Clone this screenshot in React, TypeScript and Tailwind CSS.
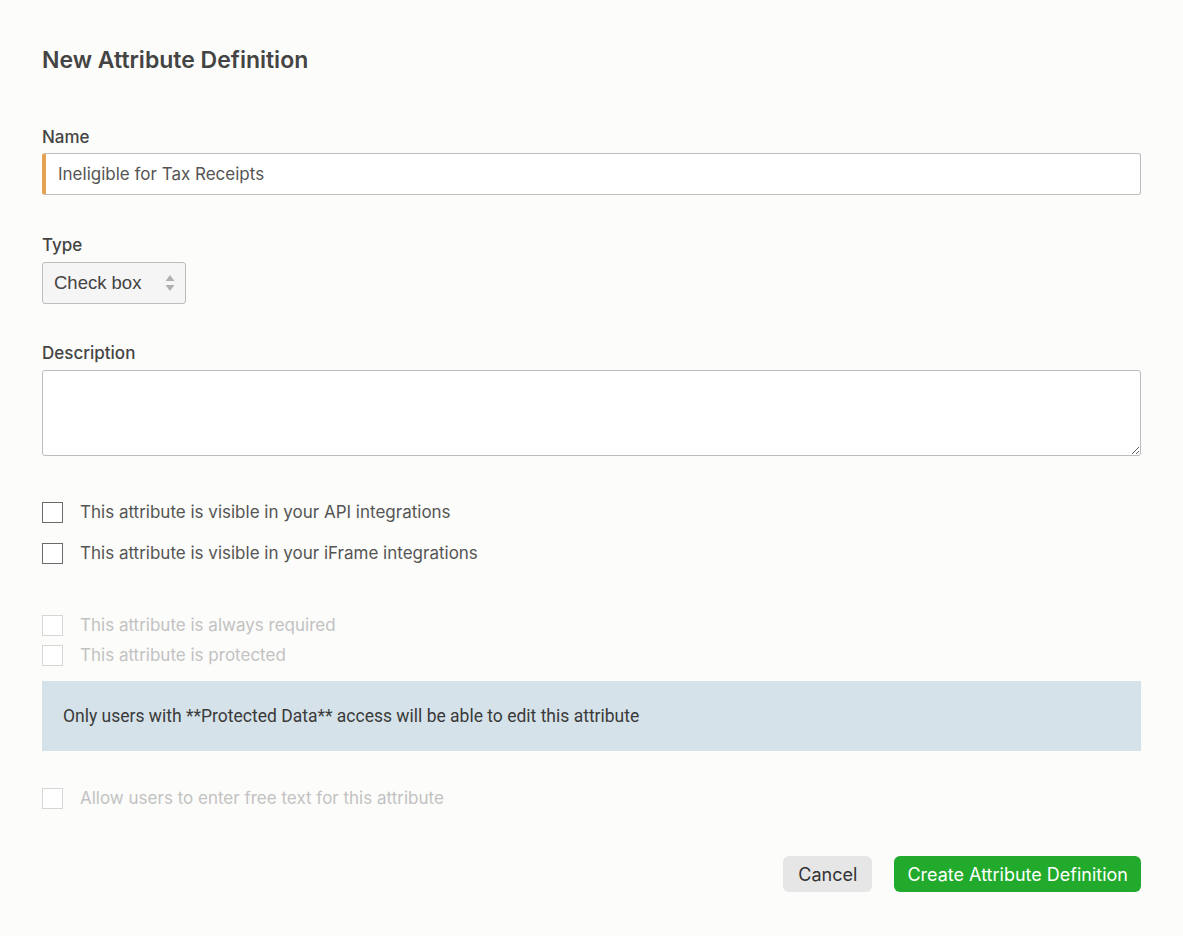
import { useState } from 'react'

const font = { fontFamily: 'Inter, "Noto Sans", sans-serif' }

function CheckRow({ label, disabled, checked, onChange }: { label: string; disabled?: boolean; checked?: boolean; onChange?: () => void }) {
  return (
    <label className={`flex items-center gap-[17px] ${disabled ? 'text-[#c2c2c2]' : 'text-[#555] cursor-pointer'}`}>
      <input
        type="checkbox"
        disabled={disabled}
        checked={!!checked}
        onChange={onChange}
        className={`appearance-none w-[21px] h-[21px] border bg-white shrink-0 ${disabled ? 'border-[#d6d6d6]' : 'border-[#6b6b6b]'}`}
      />
      <span className="text-[17px] leading-[21px]">{label}</span>
    </label>
  )
}

export default function App() {
  const [name, setName] = useState('Ineligible for Tax Receipts')
  const [api, setApi] = useState(false)
  const [iframe, setIframe] = useState(false)

  return (
    <div className="min-h-screen bg-[#fcfcfa] px-[42px] pt-[44px] pb-10" style={font}>
      <h1 className="text-[23px] font-semibold text-[#444] leading-[32px]">New Attribute Definition</h1>

      <div className="mt-[50px]">
        <div className="text-[17px] font-medium text-[#444] leading-[22px]">Name</div>
        <input
          value={name}
          onChange={e => setName(e.target.value)}
          className="mt-[5px] w-full h-[42px] border border-[#bcbcbc] border-l-[4px] border-l-[#e3a353] rounded-[3px] bg-white pl-[12px] text-[17px] text-[#555] outline-none"
        />
      </div>

      <div className="mt-[39px]">
        <div className="text-[17px] font-medium text-[#444] leading-[22px]">Type</div>
        <div className="mt-[6px] relative w-[144px] h-[42px]">
          <select
            className="appearance-none w-full h-full border border-[#bcbcbc] rounded-[3px] bg-[#f5f5f5] pl-[11px] text-[18.5px] text-[#444] outline-none"
            style={{ fontFamily: '"Liberation Sans", Arial, sans-serif' }}
          >
            <option>Check box</option>
            <option>Text</option>
            <option>Number</option>
          </select>
          <svg className="absolute right-[11px] top-[12px] pointer-events-none" width="10" height="18" viewBox="0 0 10 18">
            <path d="M5 1 L9.5 7 H0.5 Z" fill="#b0b0b0" />
            <path d="M5 17 L9.5 11 H0.5 Z" fill="#b0b0b0" />
          </svg>
        </div>
      </div>

      <div className="mt-[38px]">
        <div className="text-[17px] font-medium text-[#444] leading-[22px]">Description</div>
        <textarea className="mt-[6px] block w-full h-[86px] border border-[#bcbcbc] rounded-[3px] bg-white p-2 text-[17px] outline-none" />
      </div>

      <div className="mt-[46px] flex flex-col gap-[20px]">
        <CheckRow label="This attribute is visible in your API integrations" checked={api} onChange={() => setApi(!api)} />
        <CheckRow label="This attribute is visible in your iFrame integrations" checked={iframe} onChange={() => setIframe(!iframe)} />
      </div>

      <div className="mt-[51px] flex flex-col gap-[9px]">
        <CheckRow label="This attribute is always required" disabled />
        <CheckRow label="This attribute is protected" disabled />
      </div>

      <div
        className="mt-[15px] h-[70px] bg-[#d5e2e9] flex items-center px-[21px] text-[17.5px] text-[#3a3a3a]"
        style={{ fontFamily: 'Roboto, sans-serif' }}
      >
        Only users with **Protected Data** access will be able to edit this attribute
      </div>

      <div className="mt-[37px]">
        <CheckRow label="Allow users to enter free text for this attribute" disabled />
      </div>

      <div className="mt-[47px] flex justify-end gap-[22px]">
        <button className="h-[36px] px-[15px] rounded-[6px] bg-[#e6e6e6] text-[18px] text-[#333]">Cancel</button>
        <button className="h-[36px] px-[13px] rounded-[6px] bg-[#21aa2b] text-[18px] text-white">Create Attribute Definition</button>
      </div>
    </div>
  )
}
